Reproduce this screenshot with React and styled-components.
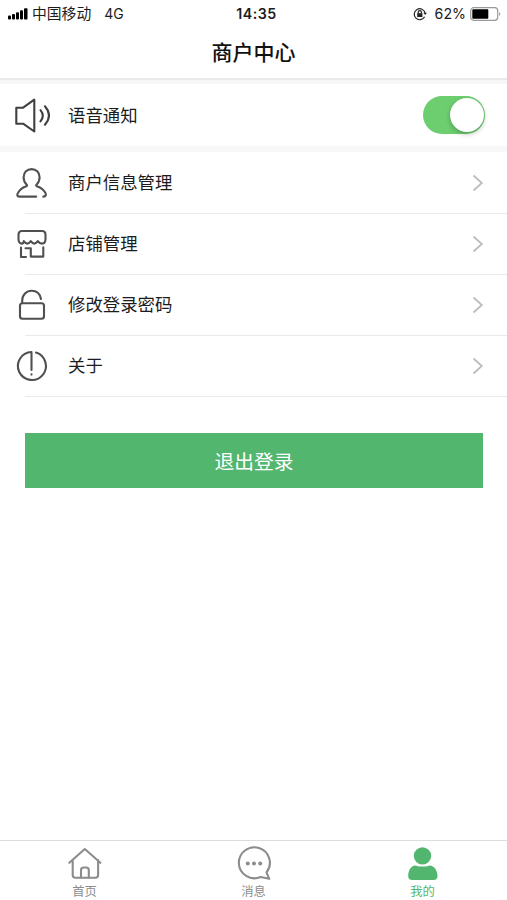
import React, { useState } from 'react';
import styled, { createGlobalStyle } from 'styled-components';

const GlobalStyle = createGlobalStyle`
  body {
    margin: 0;
    background: #fff;
    color: #1c1c1c;
    font-family: 'Liberation Sans', 'Noto Sans CJK SC', sans-serif;
  }
`;

const Page = styled.div`
  display: flex;
  flex-direction: column;
  height: 900px;
  box-sizing: border-box;
  overflow: hidden;
`;

const StatusBar = styled.div`
  display: grid;
  grid-template-columns: 1fr auto 1fr;
  align-items: center;
  height: 28px;
  padding: 0 5px 0 8px;
  font-family: Inter, 'Noto Sans CJK SC', sans-serif;
  font-size: 14px;
  line-height: 20px;
`;

const StatusGroup = styled.div`
  display: flex;
  align-items: center;
  justify-content: ${({ $end }) => ($end ? 'flex-end' : 'flex-start')};
`;

const Carrier = styled.span`
  margin: 0 13px 0 4px;
  font-size: 14.8px;
`;

const Clock = styled.span`
  padding-left: 3px;
  font-size: 14.2px;
  font-weight: 600;
  letter-spacing: 0.5px;
`;

const Percent = styled.span`
  margin: 0 4px 0 8px;
  font-size: 14.2px;
`;

const Header = styled.header`
  display: flex;
  align-items: center;
  justify-content: center;
  height: 52px;
  padding-bottom: 1px;
  border-bottom: 2px solid #e9e9e9;
  box-sizing: border-box;
`;

const Title = styled.h1`
  margin: 0;
  font-size: 21px;
  font-weight: 500;
  line-height: 30px;
  color: #111;
`;

const Divider = styled.div`
  height: ${({ $height }) => $height || 6}px;
  background: #f7f7f7;
`;

const Row = styled.div`
  display: flex;
  align-items: center;
  height: ${({ $height }) => $height || 60}px;
  padding: 0 22px 0 14px;
  gap: 18px;
`;

const MenuList = styled.div`
  padding-top: 0.5px;
`;

const RowLine = styled.div`
  height: 1.2px;
  margin-left: 25px;
  background: #e9e9e9;
`;

const Label = styled.span`
  flex: 1;
  padding-top: ${({ $top }) => $top || 0}px;
  font-size: 17.4px;
  line-height: 26px;
`;

const LineIcon = styled.svg`
  display: block;
  flex: none;
  width: 36px;
  height: 36px;
  fill: none;
  stroke: ${({ $color }) => $color || '#505050'};
  stroke-width: 2.1;
  stroke-linecap: round;
  stroke-linejoin: round;
`;

const SolidIcon = styled.svg`
  display: block;
  flex: none;
  width: 36px;
  height: 36px;
  fill: currentColor;
`;

const Arrow = styled.svg`
  width: 12px;
  height: 18px;
  margin-right: 1px;
  fill: none;
  stroke: #bdbdbd;
  stroke-width: 1.8;
`;

const Switch = styled.button`
  display: flex;
  align-items: center;
  justify-content: ${({ $on }) => ($on ? 'flex-end' : 'flex-start')};
  width: 62px;
  height: 38px;
  padding: 0 1.5px;
  border: 0;
  border-radius: 19px;
  background: ${({ $on }) => ($on ? '#6dce70' : '#ddd')};
`;

const Knob = styled.span`
  width: 34px;
  height: 34px;
  border-radius: 50%;
  background: #fff;
  box-shadow: 0 2px 5px rgba(0, 0, 0, 0.25);
`;

const LogoutButton = styled.button`
  height: 55px;
  margin: 36px 24px 0 25px;
  padding-top: 3px;
  border: 0;
  background: #53b66f;
  color: #fff;
  font-family: inherit;
  font-size: 19.8px;
  line-height: 30px;
`;

const TabBar = styled.nav`
  display: flex;
  height: 60px;
  margin-top: auto;
  border-top: 1px solid #dcdcdc;
  box-sizing: border-box;
`;

const Tab = styled.div`
  flex: 1;
  display: flex;
  flex-direction: column;
  align-items: center;
  padding-top: 5px;
  color: ${({ $active }) => ($active ? '#53b66f' : '#8c8c8c')};
  font-size: 12.3px;
  line-height: 18px;
`;

const TabLabel = styled.span`
  margin-top: 1px;
`;

const SoundIcon = () => (
  <LineIcon viewBox="0 0 36 36" $color="#404040">
    <path d="M2.3 10.7h6.8l11.2-8v31.8L9.1 26.7H2.3z" />
    <path d="M26.5 13.2q4.6 5.6 0 11.2M31 9.3q8 9.2 0 18.4" />
  </LineIcon>
);

const MerchantIcon = () => (
  <LineIcon viewBox="0 0 36 36">
    <path d="M22.2 31.6H5.2c-2.4 0-2.3-2.2-1-4.1 1.9-3.3 4.7-5.3 8.2-6.3.9-.4.8-1.1.1-1.8-2-2-2.9-4-2.9-7.1 0-5 3.500-8.200 8-8.200s8 3.200 8 8.200c0 3.100-.9 5.100-2.900 7.100-.7.700-.8 1.400.1 1.800 3.600 1 6.400 3 8.400 6.300 1.300 2.100.8 3.900-1.900 4.100" />
  </LineIcon>
);

const ShopIcon = () => (
  <LineIcon viewBox="0 0 36 36">
    <path d="M8 5h20q3.5 0 3.5 3.5V13q0 4.600-3.500 4.600-2.500 0-4.200-2.400-3.500 4.800-7 0-3.500 4.800-7 0Q9.300 17.600 8 17.600 4.500 17.600 4.500 13V8.500Q4.500 5 8 5z" />
    <path d="M7 21.5V31h5M11.5 22.3h5.300v8.300h12.500v-9.200" />
  </LineIcon>
);

const LockIcon = () => (
  <LineIcon viewBox="0 0 36 36">
    <rect x="6" y="16.3" width="24" height="15.5" rx="2.5" />
    <path d="M8.2 16v-2.500c0-5.500 4.300-9.700 9.500-9.700 4.700 0 8.300 3.200 9.300 8.200" />
  </LineIcon>
);

const AboutIcon = () => (
  <LineIcon viewBox="0 0 36 36">
    <path d="M22 4.6A14 14 0 1 1 17.5 4v18M17.5 26.200v.4" />
  </LineIcon>
);

const HomeIcon = () => (
  <LineIcon viewBox="0 0 36 36" $color="#8c8c8c">
    <path d="M2.3 16.8 17.8 3l15.600 13.800M5.700 14v15q0 2.700 2.700 2.700h20q2.700 0 2.700-2.700V14" />
    <path d="M14 31.5v-7.300q0-2.700 2.700-2.700h2.400q2.700 0 2.700 2.700v7.300" />
  </LineIcon>
);

const MessageIcon = () => (
  <LineIcon viewBox="0 0 36 36" $color="#8c8c8c">
    <path d="M30.500 26.400A15.500 15.500 0 1 0 24.500 31l8.800 1.800z" />
    <g fill="#8c8c8c" stroke="none">
      <circle cx="11.8" cy="17.500" r="2" />
      <circle cx="18" cy="17.500" r="2" />
      <circle cx="24.2" cy="17.500" r="2" />
    </g>
  </LineIcon>
);

const UserIcon = () => (
  <SolidIcon viewBox="0 0 36 36">
    <circle cx="17.5" cy="9.900" r="8.700" />
    <path d="M10.300 19.400q7.200 2.400 14.400 0c4.600 0 7.800 5.200 7.800 10.600q0 4-4 4H7.200q-4 0-4-4c0-5.400 2.700-10.600 7.100-10.600z" />
  </SolidIcon>
);

const SignalIcon = () => (
  <svg width="20" height="13" viewBox="0 0 20 13" fill="#000">
    <rect x="0" y="7.5" width="3" height="4" rx="1" />
    <rect x="4" y="6" width="3" height="5.5" rx="1" />
    <rect x="8" y="4.2" width="3" height="7.3" rx="1" />
    <rect x="12" y="2.2" width="3" height="9.3" rx="1" />
    <rect x="16" y="0.3" width="3.5" height="11.2" rx="1" />
  </svg>
);

const RotationLockIcon = () => (
  <svg width="14" height="14" viewBox="0 0 14 14" fill="none" stroke="#222" strokeWidth="1.2">
    <path d="M11.6 9.8A5.5 5.5 0 1 1 12.1 6" />
    <path d="M10.3 5.7h3.600l-1.700 2.400z" fill="#222" stroke="none" />
    <rect x="4.2" y="6.2" width="5.2" height="3.8" fill="#222" stroke="none" />
    <path d="M5.2 6.5V5.200q0-1.600 1.600-1.600t1.600 1.600v1.300" />
  </svg>
);

const BatteryIcon = () => (
  <svg width="32" height="15" viewBox="0 0 32 15" fill="none">
    <rect x="0.7" y="0.7" width="27" height="12.6" rx="3" stroke="#999" strokeWidth="1.2" />
    <rect x="2.3" y="2.3" width="16" height="9.4" rx="0.8" fill="#000" />
    <path d="M29.200 5q2.400 2 0 4z" fill="#999" />
  </svg>
);

const App = () => {
  const [voiceOn, setVoiceOn] = useState(true);

  const menus = [
    { label: '商户信息管理', Icon: MerchantIcon },
    { label: '店铺管理', Icon: ShopIcon },
    { label: '修改登录密码', Icon: LockIcon },
    { label: '关于', Icon: AboutIcon }
  ];

  const tabs = [
    { label: '首页', Icon: HomeIcon },
    { label: '消息', Icon: MessageIcon },
    { label: '我的', Icon: UserIcon, active: true }
  ];

  return (
    <Page>
      <GlobalStyle />
      <StatusBar>
        <StatusGroup>
          <SignalIcon />
          <Carrier>中国移动</Carrier>
          <span>4G</span>
        </StatusGroup>
        <Clock>14:35</Clock>
        <StatusGroup $end>
          <RotationLockIcon />
          <Percent>62%</Percent>
          <BatteryIcon />
        </StatusGroup>
      </StatusBar>
      <Header>
        <Title>商户中心</Title>
      </Header>
      <Divider $height={4} />
      <Row $height={62}>
        <SoundIcon />
        <Label $top={2}>语音通知</Label>
        <Switch $on={voiceOn} onClick={() => setVoiceOn(!voiceOn)}>
          <Knob />
        </Switch>
      </Row>
      <Divider />
      <MenuList>
        {menus.map(({ label, Icon }) => (
          <React.Fragment key={label}>
            <Row>
              <Icon />
              <Label>{label}</Label>
              <Arrow viewBox="0 0 12 18">
                <path d="M1.5 1.5 9.8 9l-8.300 7.500" />
              </Arrow>
            </Row>
            <RowLine />
          </React.Fragment>
        ))}
      </MenuList>
      <LogoutButton>退出登录</LogoutButton>
      <TabBar>
        {tabs.map(({ label, Icon, active }) => (
          <Tab key={label} $active={active}>
            <Icon />
            <TabLabel>{label}</TabLabel>
          </Tab>
        ))}
      </TabBar>
    </Page>
  );
};

export default App;
